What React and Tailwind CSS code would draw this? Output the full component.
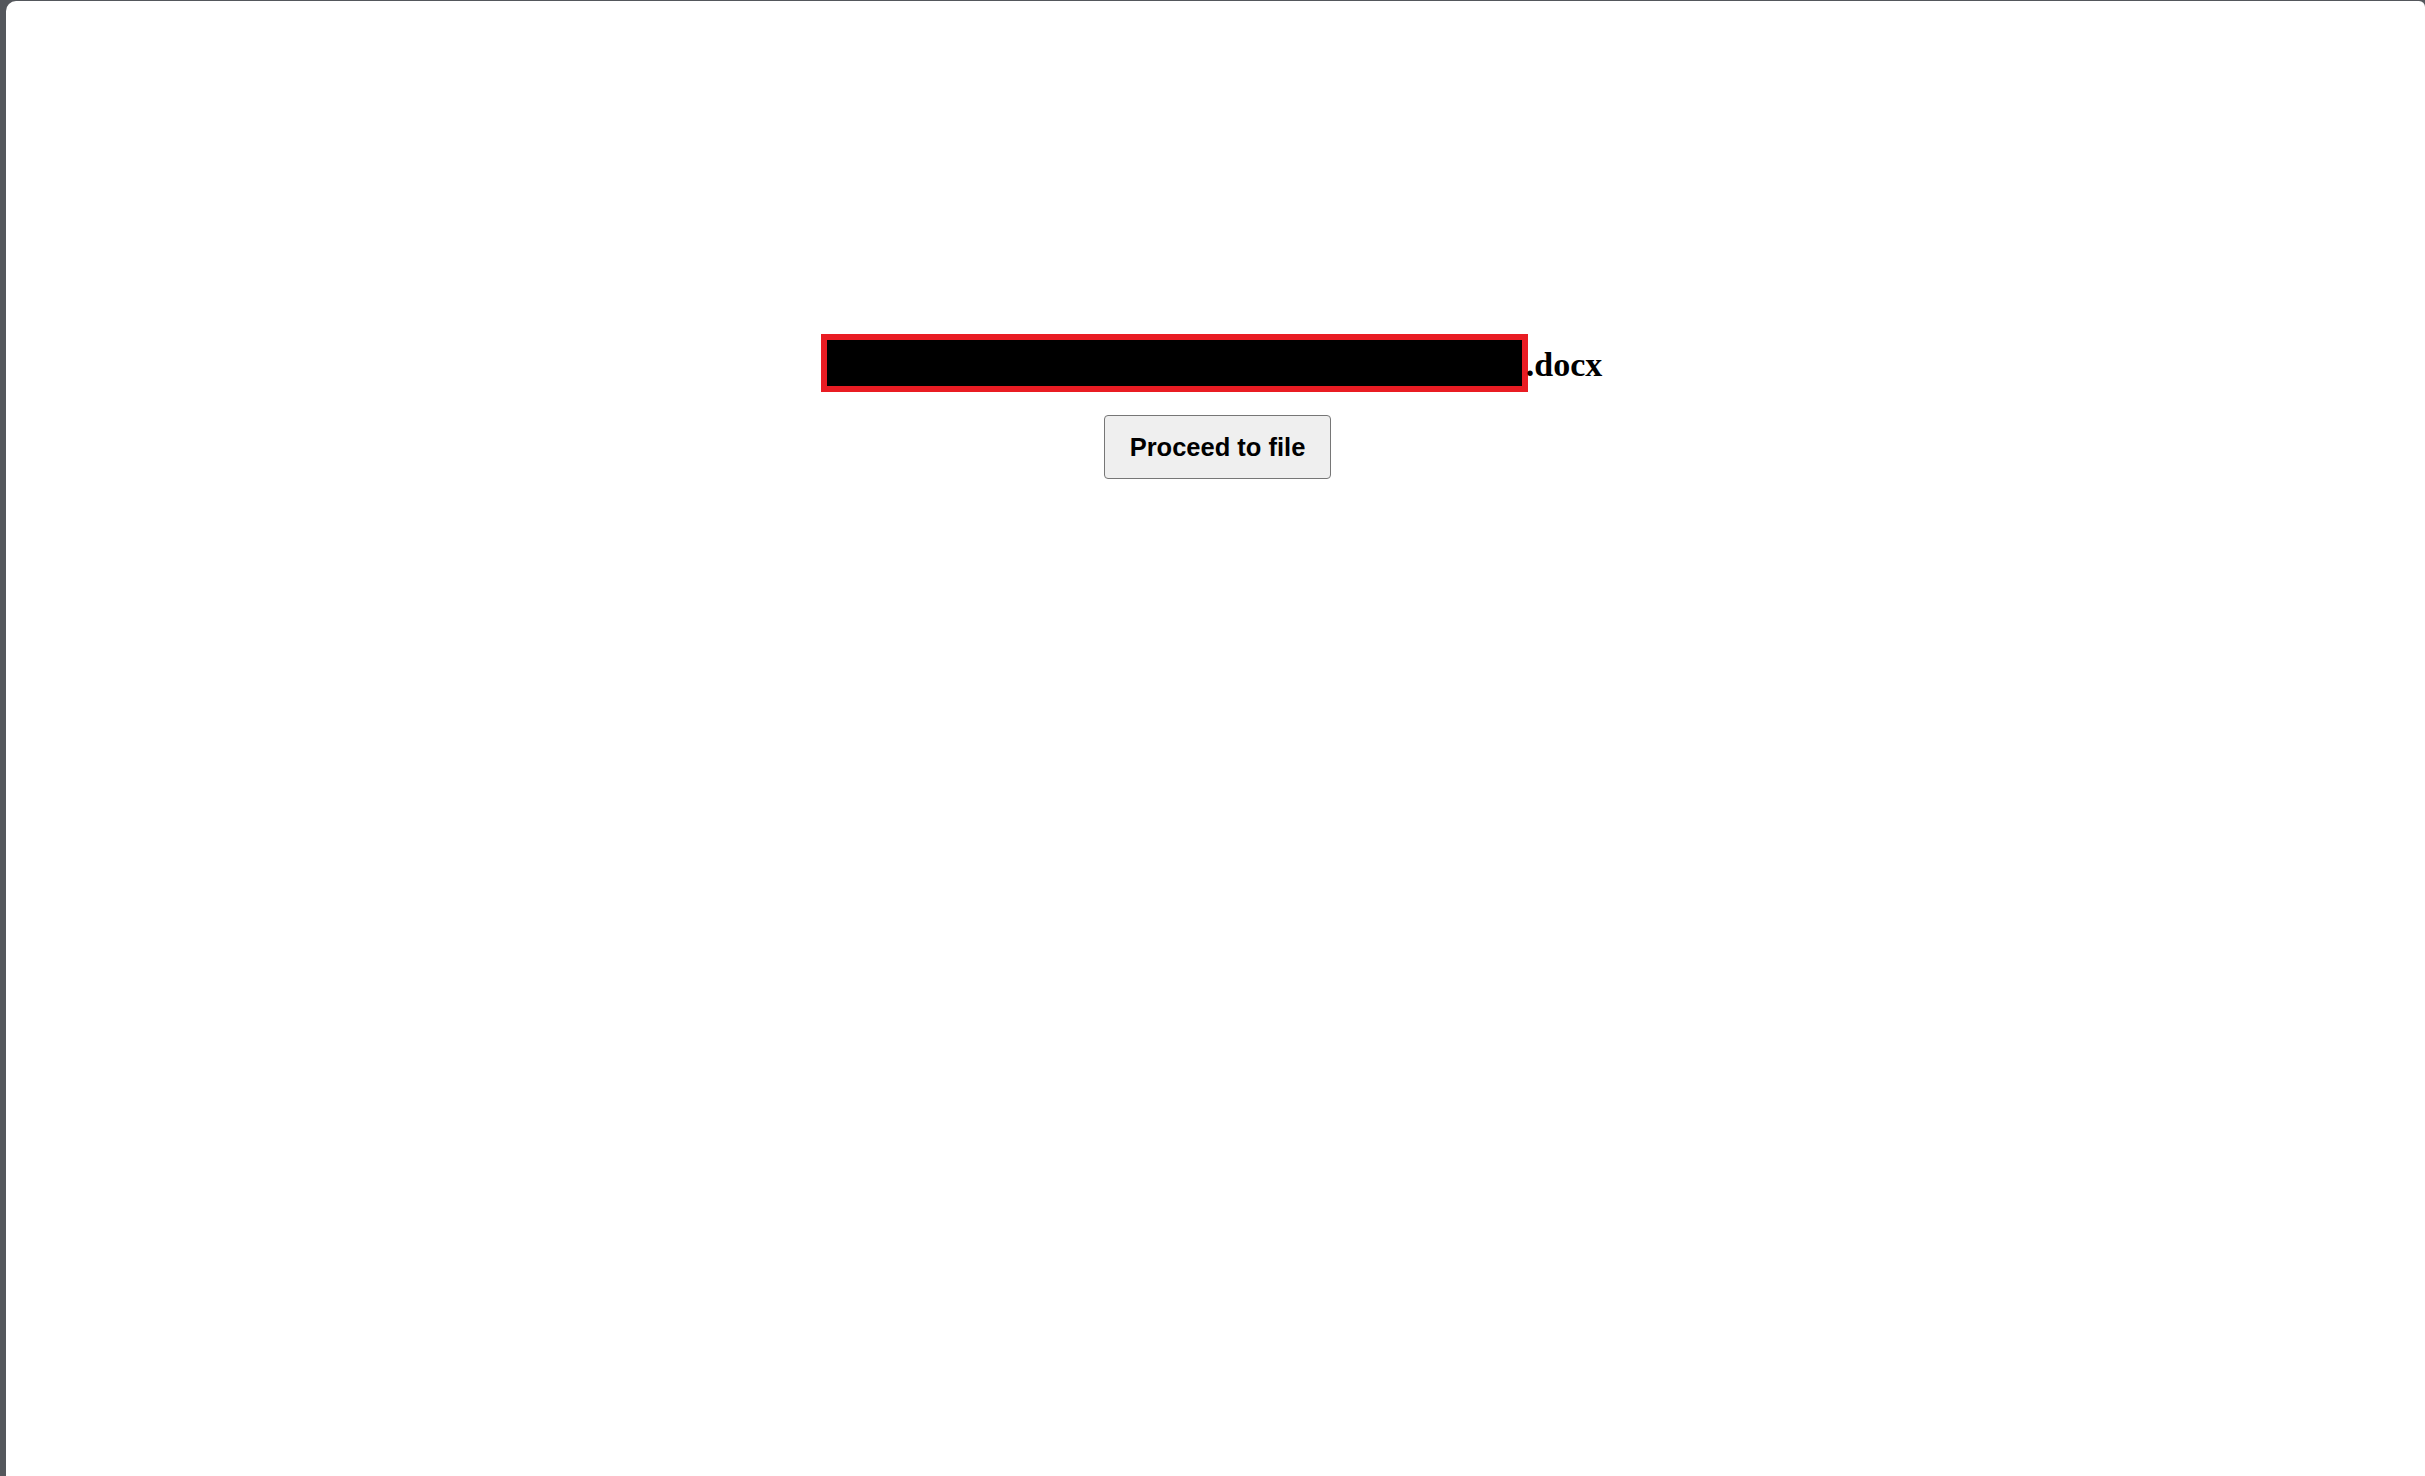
const App = () => {
  return (
    <div className="min-h-screen h-[1476px] bg-[#54575c] pl-[6px] pt-[1px]">
      <div className="h-full bg-white rounded-tl-[10px] rounded-tr-[6px]">
        <div className="pt-[333px] flex flex-col items-center">
          <h1 className="mr-[8px] flex items-center font-bold text-[34px] text-black font-['Liberation_Serif',serif]">
            <span className="block w-[707px] h-[58px] bg-black border-[6px] border-[#e91c23]"></span>
            <span className="-ml-[2px] leading-none pt-[3px]">.docx</span>
          </h1>
          <button className="ml-[4px] mt-[23px] h-[64px] px-[25px] bg-[#efefef] border border-[#767676] rounded-[4px] text-[25.5px] font-bold text-black font-['Liberation_Sans',Arial,sans-serif]">
            Proceed to file
          </button>
        </div>
      </div>
    </div>
  );
};

export default App;
